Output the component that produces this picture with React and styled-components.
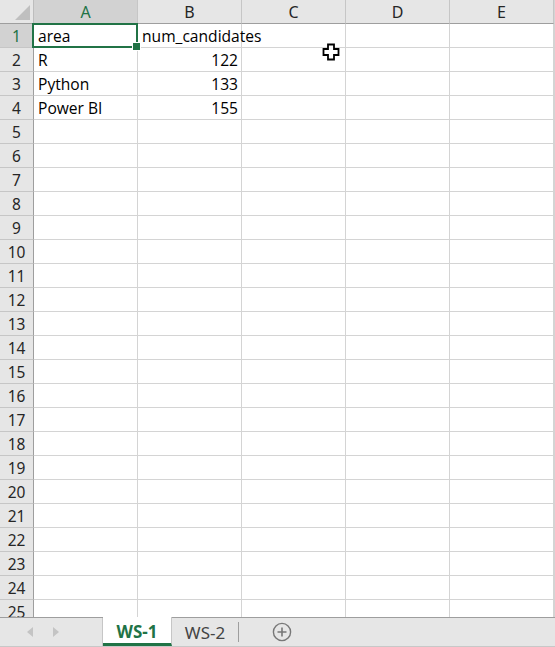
import React from "react";
import styled, { createGlobalStyle } from "styled-components";

const GlobalStyle = createGlobalStyle`
  html, body {
    margin: 0;
    padding: 0;
    background: #ffffff;
    overflow: hidden;
  }
  * { box-sizing: border-box; }
`;

const Window = styled.div`
  width: 555px;
  height: 647px;
  display: flex;
  flex-direction: column;
  font-family: "Open Sans", "Noto Sans", sans-serif;
  color: #000;
  overflow: hidden;
`;

const Sheet = styled.div`
  height: 617px;
  overflow: hidden;
  display: grid;
  grid-template-columns: 34px repeat(5, 104px) 1px;
  grid-auto-rows: 24px;
  border-right: 1px solid #d4d4d4;
`;

const Corner = styled.div`
  background: #e6e6e6;
  border-right: 1px solid #bdbdbd;
  border-bottom: 1px solid #9e9e9e;
  position: relative;
  overflow: hidden;
  &::after {
    content: "";
    position: absolute;
    right: 3px;
    bottom: 3px;
    border-style: solid;
    border-width: 0 0 15px 15px;
    border-color: transparent transparent #bfbfbf transparent;
  }
`;

const ColHead = styled.div`
  background: ${(p) => (p.$active ? "#d2d2d2" : "#e6e6e6")};
  color: ${(p) => (p.$active ? "#217346" : "#262626")};
  border-right: 1px solid #c6c6c6;
  border-bottom: 1px solid #9e9e9e;
  display: flex;
  align-items: center;
  justify-content: center;
  font-family: "Noto Sans", sans-serif;
  font-size: 16px;
  padding-top: 1px;
`;

const RowHead = styled.div`
  background: ${(p) => (p.$active ? "#d2d2d2" : "#e6e6e6")};
  color: ${(p) => (p.$active ? "#217346" : "#262626")};
  border-right: 1px solid #9e9e9e;
  border-bottom: 1px solid #c6c6c6;
  display: flex;
  align-items: center;
  justify-content: center;
  font-family: "Noto Sans", sans-serif;
  font-size: 15.5px;
`;

const Cell = styled.div`
  position: relative;
  border-right: 1px solid #d4d4d4;
  border-bottom: 1px solid #d4d4d4;
  display: flex;
  align-items: center;
  justify-content: ${(p) => (p.$num ? "flex-end" : "flex-start")};
  padding: 0 3px 0 4px;
  font-size: 15.6px;
  white-space: nowrap;
  overflow: ${(p) => (p.$spill ? "visible" : "hidden")};
  z-index: ${(p) => (p.$top ? 3 : p.$spill ? 2 : 1)};
`;

const Edge = styled.div`
  border-bottom: 1px solid #d4d4d4;
`;

const Selection = styled.div`
  position: absolute;
  left: -2px;
  top: -1px;
  width: 106px;
  height: 25px;
  border: 2px solid #217346;
  pointer-events: none;
  &::after {
    content: "";
    position: absolute;
    right: -5px;
    bottom: -5px;
    width: 7px;
    height: 7px;
    background: #217346;
    border: 1px solid #ffffff;
  }
`;

const Cursor = styled.svg`
  position: absolute;
  left: 322px;
  top: 43px;
  z-index: 5;
`;

const TabBar = styled.div`
  height: 30px;
  background: #e6e6e6;
  border-top: 1px solid #9e9e9e;
  border-bottom: 1px solid #c8c8c8;
  display: flex;
  align-items: stretch;
`;

const Nav = styled.div`
  width: 103px;
  display: flex;
  align-items: center;
  gap: 20px;
  padding-left: 27px;
  border-right: 1px solid #c6c6c6;
`;

const Arrow = styled.span`
  width: 0;
  height: 0;
  border-top: 5px solid transparent;
  border-bottom: 5px solid transparent;
  ${(p) =>
    p.$dir === "left"
      ? "border-right: 6px solid #c4c4c4;"
      : "border-left: 6px solid #c4c4c4;"}
`;

const Tab = styled.div`
  width: ${(p) => (p.$active ? "69px" : "66px")};
  margin-top: ${(p) => (p.$active ? "-1px" : "0")};
  display: flex;
  align-items: center;
  justify-content: center;
  background: ${(p) => (p.$active ? "#ffffff" : "transparent")};
  color: ${(p) => (p.$active ? "#217346" : "#444444")};
  font-family: "Noto Sans", sans-serif;
  font-weight: ${(p) => (p.$active ? 700 : 400)};
  font-size: 17px;
  border-bottom: ${(p) => (p.$active ? "3px solid #217346" : "none")};
  border-right: ${(p) => (p.$active ? "1px solid #c6c6c6" : "none")};
  padding-top: ${(p) => (p.$active ? "3px" : "0")};
`;

const Divider = styled.div`
  width: 1px;
  background: #9e9e9e;
  margin: 4px 0 4px 0;
`;

const AddButton = styled.div`
  width: 86px;
  display: flex;
  align-items: center;
  justify-content: center;
`;

const cols = ["A", "B", "C", "D", "E"];
const data = {
  1: ["area", "num_candidates"],
  2: ["R", 122],
  3: ["Python", 133],
  4: ["Power BI", 155],
};

export default function App() {
  const rows = Array.from({ length: 25 }, (_, i) => i + 1);
  return (
    <Window>
      <GlobalStyle />
      <Sheet>
        <Corner />
        {cols.map((c) => (
          <ColHead key={c} $active={c === "A"}>
            {c}
          </ColHead>
        ))}
        <Edge />
        {rows.map((r) => (
          <React.Fragment key={r}>
            <RowHead $active={r === 1}>{r}</RowHead>
            {cols.map((c, ci) => {
              const v = data[r] ? data[r][ci] : undefined;
              const isNum = typeof v === "number";
              const selected = r === 1 && ci === 0;
              return (
                <Cell
                  key={c}
                  $num={isNum}
                  $spill={selected || (r === 1 && ci === 1)}
                  $top={selected}
                >
                  {v}
                  {selected && <Selection />}
                </Cell>
              );
            })}
            <Edge />
          </React.Fragment>
        ))}
      </Sheet>
      <TabBar>
        <Nav>
          <Arrow $dir="left" />
          <Arrow $dir="right" />
        </Nav>
        <Tab $active>WS-1</Tab>
        <Tab>WS-2</Tab>
        <Divider />
        <AddButton>
          <svg width="20" height="20" viewBox="0 0 20 20">
            <circle cx="10" cy="10" r="8.6" fill="none" stroke="#777" strokeWidth="1.4" />
            <path d="M10 5.5v9M5.5 10h9" stroke="#777" strokeWidth="1.6" />
          </svg>
        </AddButton>
      </TabBar>
      <Cursor width="18" height="18" viewBox="0 0 18 18">
        <path
          d="M6 1.5h6v4.5h4.5v6h-4.5v4.5h-6v-4.5h-4.5v-6h4.5z"
          fill="#fff"
          stroke="#000"
          strokeWidth="1.8"
        />
      </Cursor>
    </Window>
  );
}
